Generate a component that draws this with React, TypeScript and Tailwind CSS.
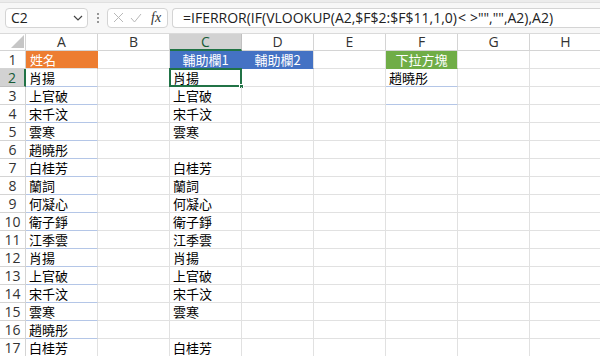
import React from "react";

const names = [
  "肖揚", "上官破", "宋千汶", "雲寒", "趙曉彤", "白桂芳", "蘭詞", "何凝心",
  "衛子錚", "江季雲", "肖揚", "上官破", "宋千汶", "雲寒", "趙曉彤", "白桂芳",
];

const cols = ["A", "B", "C", "D", "E", "F", "G", "H"];

const cjk = { fontFamily: '"Noto Sans CJK TC", "Noto Sans", sans-serif' };
const ui = { fontFamily: '"Open Sans", "Noto Sans", sans-serif' };

function Cell({ children, className = "" }: { children?: React.ReactNode; className?: string }) {
  return (
    <div className={`w-[72px] h-[18px] shrink-0 border-r border-b border-[#e1e1e1] flex items-center text-[13px] leading-none text-black overflow-hidden whitespace-nowrap ${className}`} style={cjk}>
      {children}
    </div>
  );
}

export default function App() {
  return (
    <div className="w-[600px] h-[356px] overflow-hidden bg-white select-none" style={ui}>
      {/* Formula bar */}
      <div className="h-[34px] border-b border-[#dadada] bg-[#f7f7f7] flex items-center relative">
        <div className="absolute top-0 left-0 right-0 h-[3px] bg-[#ececec] border-b border-[#e0e0e0]" />
        <div className="ml-[5px] mt-[2px] w-[83px] h-[20px] bg-white border border-[#d4d4d4] rounded-[4px] flex items-center justify-between pl-[5px] pr-[4px]">
          <span className="text-[14px] text-[#222]">C2</span>
          <svg width="10" height="6" viewBox="0 0 10 6"><path d="M1 1l4 4 4-4" fill="none" stroke="#444" strokeWidth="1.2" /></svg>
        </div>
        <div className="w-[19px] mt-[2px] flex flex-col items-center gap-[2px]">
          <span className="w-[2px] h-[2px] bg-[#777] rounded-full" />
          <span className="w-[2px] h-[2px] bg-[#777] rounded-full" />
          <span className="w-[2px] h-[2px] bg-[#777] rounded-full" />
        </div>
        <div className="mt-[2px] w-[61px] h-[20px] bg-white border border-[#d4d4d4] rounded-[4px] flex items-center pl-[5px] gap-[6px]">
          <svg width="11" height="11" viewBox="0 0 11 11"><path d="M1 1l9 9M10 1l-9 9" stroke="#b8b8b8" strokeWidth="1" /></svg>
          <svg width="12" height="10" viewBox="0 0 12 10"><path d="M1 5l3.5 4L11 1" fill="none" stroke="#b8b8b8" strokeWidth="1" /></svg>
          <span className="ml-[3px] text-[14px] italic text-[#333] leading-none" style={{ fontFamily: '"Liberation Serif", serif' }}>fx</span>
        </div>
        <div className="ml-[4px] mt-[2px] flex-1 h-[20px] bg-white border border-[#d4d4d4] rounded-l-[4px] border-r-0 flex items-center pl-[10px]">
          <span className="text-[14px] text-[#222] whitespace-nowrap">
            =IFERROR(IF(VLOOKUP(A2,$F$2:$F$11,1,0)<span className="mx-[1px] tracking-[3px]">&lt;</span>&gt;"","",A2),A2)
          </span>
        </div>
      </div>

      {/* Column headers */}
      <div className="flex h-[17px]">
        <div className="w-[26px] shrink-0 border-r border-b border-[#d4d4d4] relative bg-white">
          <svg className="absolute right-[1px] bottom-[2px]" width="13" height="13" viewBox="0 0 13 13"><path d="M13 0L13 13L0 13Z" fill="#c6c6c6" /></svg>
        </div>
        {cols.map((c) => (
          <div
            key={c}
            className={`w-[72px] shrink-0 flex items-center justify-center text-[14px] leading-none ${
              c === "C"
                ? "bg-[#d2d2d2] text-[#185c37] border-b-2 border-b-[#217346] border-r border-r-[#c0c0c0]"
                : "bg-white text-[#333] border-r border-b border-[#d4d4d4]"
            }`}
          >
            {c}
          </div>
        ))}
      </div>

      {/* Row 1 */}
      <div className="flex">
        <div className="w-[26px] h-[18px] shrink-0 border-r border-b border-[#d4d4d4] flex items-center justify-center text-[14px] text-[#333] leading-none">1</div>
        <Cell className="bg-[#ed7d31] text-white pl-[4px] border-r-[#ed7d31]"><span className="text-white">姓名</span></Cell>
        <Cell />
        <Cell className="bg-[#4472c4] justify-center border-r-[#4472c4] border-b-[#4472c4]"><span className="text-white">輔助欄1</span></Cell>
        <Cell className="bg-[#4472c4] justify-center border-b-[#4472c4]"><span className="text-white">輔助欄2</span></Cell>
        <Cell />
        <Cell className="bg-[#70ad47] justify-center border-b-[#70ad47]"><span className="text-white">下拉方塊</span></Cell>
        <Cell />
        <Cell />
      </div>

      {/* Data rows */}
      {names.map((n, i) => {
        const row = i + 2;
        const sel = row === 2;
        return (
          <div key={row} className="flex">
            <div
              className={`w-[26px] h-[18px] shrink-0 border-b flex items-center justify-center text-[14px] leading-none ${
                sel
                  ? "bg-[#d2d2d2] text-[#185c37] border-b-[#c0c0c0] border-r-2 border-r-[#217346]"
                  : "text-[#333] border-r border-[#d4d4d4]"
              }`}
            >
              {row}
            </div>
            <Cell className="pl-[3px] border-b-[#b4c6e7]">{n}</Cell>
            <Cell />
            <Cell className="pl-[3px] relative overflow-visible">
              {n === "趙曉彤" ? "" : n}
              {sel && (
                <div className="absolute left-[-1px] top-[-1px] w-[73px] h-[19px] border-2 border-[#217346]">
                  <div className="absolute right-[-4px] bottom-[-4px] w-[5px] h-[5px] bg-[#217346] border border-white" />
                </div>
              )}
            </Cell>
            <Cell />
            <Cell />
            <Cell className={`pl-[3px] ${row <= 3 ? "border-b-[#b4c6e7]" : ""}`}>{row === 2 ? "趙曉彤" : ""}</Cell>
            <Cell />
            <Cell />
          </div>
        );
      })}
    </div>
  );
}
